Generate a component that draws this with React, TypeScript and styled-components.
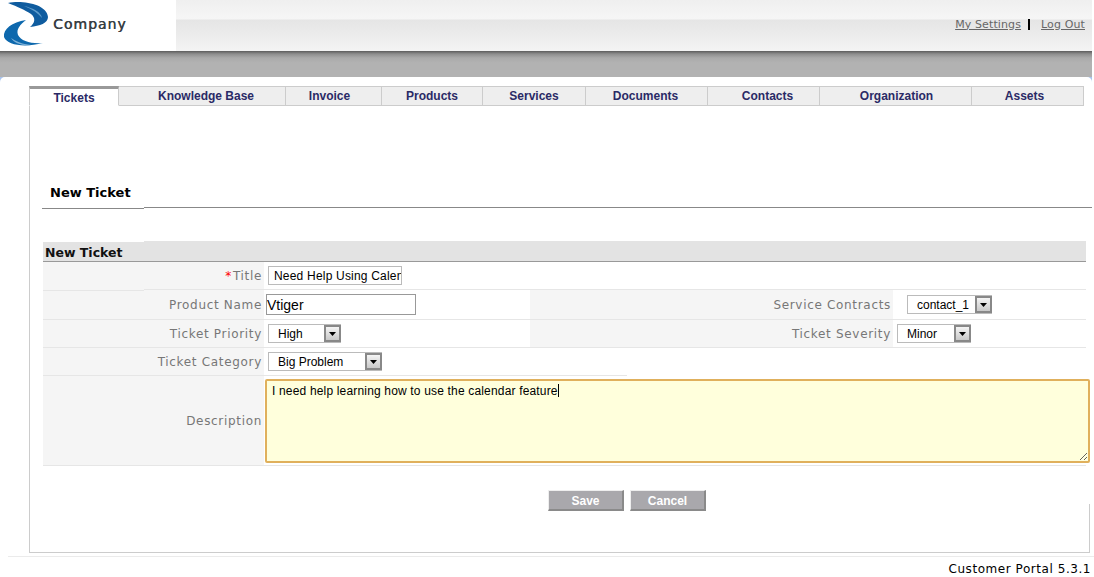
import React from 'react';
import styled, { createGlobalStyle } from 'styled-components';

const TABS = [
  { name: 'Tickets', width: 90, active: true, shift: 0 },
  { name: 'Knowledge Base', width: 167, shift: 4 },
  { name: 'Invoice', width: 96, shift: -4 },
  { name: 'Products', width: 101, shift: 0 },
  { name: 'Services', width: 103, shift: 0 },
  { name: 'Documents', width: 122, shift: -1 },
  { name: 'Contacts', width: 112, shift: 4 },
  { name: 'Organization', width: 152, shift: 1 },
  { name: 'Assets', width: 112, shift: -3 },
];

const GUTTER_ROWS = [29, 29, 28, 28, 90];

const Logo = () => (
  <svg width="52" height="50" viewBox="0 0 52 50">
    <path
      d="M8 3 C22 0 47 4 48 17 C48 23 40 26 30 27 C35 23 36 18 31 14 C25 10 18 7 8 3 Z"
      fill="#0f5c9f"
    />
    <path d="M24 6 C33 8 41 12 42 18 C38 13 32 9 24 6 Z" fill="#5f9ccb" />
    <path
      d="M26 20 C12 22 3 29 4 37 C7 45 24 48 43 43 C31 44 21 41 18 35 C16 29 20 25 26 20 Z"
      fill="#0d68ad"
    />
    <path d="M11 38 C15 41 22 44 31 45 C22 46 14 43 11 38 Z" fill="#7fb2d8" />
  </svg>
);

const Arrow = () => (
  <svg width="7" height="4" viewBox="0 0 7 4">
    <path d="M0 0 H7 L3.5 4 Z" fill="#000" />
  </svg>
);

const Select = ({
  value,
  width,
  valueInset = 9,
  offset = 4,
}: {
  value: string;
  width: number;
  valueInset?: number;
  offset?: number;
}) => (
  <SelectBox $width={width} $offset={offset}>
    <SelectValue $inset={valueInset}>{value}</SelectValue>
    <SelectButton>
      <Arrow />
    </SelectButton>
  </SelectBox>
);

export default function App() {
  return (
    <Page>
      <GlobalStyle />
      <Header>
        <LogoBox>
          <Logo />
          <LogoText>Company</LogoText>
        </LogoBox>
        <UserLinks>
          <UserLink href="#">My Settings</UserLink>
          <LinkDivider />
          <UserLink href="#">Log Out</UserLink>
        </UserLinks>
      </Header>
      <Band />
      <MainBackdrop>
        <Main>
          <Tabs>
            {TABS.map((tab) => (
              <Tab
                key={tab.name}
                $width={tab.width}
                $active={tab.active}
                $shift={tab.shift}
              >
                {tab.name}
              </Tab>
            ))}
          </Tabs>
          <Panel>
            <Heading>
              <HeadingLead>New Ticket</HeadingLead>
              <HeadingRule />
            </Heading>
            <Form>
              <Gutter>
                <GutterTitle>New Ticket</GutterTitle>
                {GUTTER_ROWS.map((height, i) => (
                  <GutterCell key={i} $height={height} />
                ))}
              </Gutter>
              <Fields>
                <FieldsBand />
                <Row $height={28}>
                  <Label>
                    <Required>*</Required>Title
                  </Label>
                  <Value>
                    <TitleInput defaultValue="Need Help Using Calendar" />
                  </Value>
                </Row>
                <Row $height={30}>
                  <Label>Product Name</Label>
                  <Value>
                    <ProductInput defaultValue="Vtiger" />
                  </Value>
                  <Label>Service Contracts</Label>
                  <Value>
                    <Select value="contact_1" width={85} offset={14} />
                  </Value>
                </Row>
                <Row $height={28}>
                  <Label>Ticket Priority</Label>
                  <Value>
                    <Select value="High" width={73} />
                  </Value>
                  <Label>Ticket Severity</Label>
                  <Value>
                    <Select value="Minor" width={74} />
                  </Value>
                </Row>
                <Row $height={28} $short>
                  <Label>Ticket Category</Label>
                  <Value>
                    <Select value="Big Problem" width={114} />
                  </Value>
                </Row>
                <Row $height={90}>
                  <Label>Description</Label>
                  <Value>
                    <Description>
                      I need help learning how to use the calendar feature
                      <Caret />
                    </Description>
                  </Value>
                </Row>
              </Fields>
            </Form>
            <Actions>
              <ActionButton>Save</ActionButton>
              <ActionButton>Cancel</ActionButton>
            </Actions>
          </Panel>
        </Main>
      </MainBackdrop>
      <Footer>Customer Portal 5.3.1</Footer>
    </Page>
  );
}

const GlobalStyle = createGlobalStyle`
  html, body {
    margin: 0;
    padding: 0;
    background: #fff;
  }
  body {
    font-family: "Liberation Sans", Arial, sans-serif;
    overflow: hidden;
  }
`;

const Page = styled.div`
  width: 1094px;
  height: 577px;
  overflow: hidden;
`;

const Header = styled.header`
  width: 1092px;
  height: 51px;
  display: flex;
  justify-content: space-between;
  background: linear-gradient(#efefef, #f6f6f6 19px, #e5e5e5 20px, #f3f3f3 50px);
`;

const LogoBox = styled.div`
  width: 176px;
  height: 51px;
  background: #fff;
  display: flex;
  align-items: flex-start;
  gap: 1px;
`;

const LogoText = styled.span`
  font-family: "DejaVu Sans", sans-serif;
  font-size: 14px;
  line-height: 16px;
  letter-spacing: 1px;
  color: #383e44;
  margin-top: 16px;
  text-shadow: 0.4px 0 0 #383e44;
`;

const UserLinks = styled.nav`
  display: flex;
  align-items: center;
  height: 48px;
  gap: 7px;
  padding-right: 7px;
`;

const UserLink = styled.a`
  font-family: "DejaVu Sans", sans-serif;
  font-size: 11px;
  letter-spacing: 0.12px;
  color: #666;
  text-decoration: underline;
`;

const LinkDivider = styled.span`
  width: 2px;
  height: 11px;
  margin-right: 4px;
  background: #000;
`;

const Band = styled.div`
  width: 1092px;
  height: 26px;
  background: linear-gradient(#5c5c5c, #8e8e8e 3px, #aaa 7px, #b2b2b2 12px);
`;

const MainBackdrop = styled.div`
  width: 1092px;
  background: linear-gradient(#a9c4ee 5px, #fff 5px);
`;

const Main = styled.main`
  background: #fff;
  border-radius: 5px 5px 0 0;
  padding: 9px 0 0 29px;
`;

const Tabs = styled.div`
  display: flex;
  height: 20px;
`;

const Tab = styled.div<{ $width: number; $active?: boolean; $shift: number }>`
  width: ${(p) => p.$width}px;
  box-sizing: border-box;
  display: flex;
  align-items: center;
  justify-content: center;
  font-size: 12px;
  font-weight: bold;
  color: #2a2a66;
  background: ${(p) => (p.$active ? '#fff' : '#eee')};
  border: 1px solid #ccc;
  border-left-width: ${(p) => (p.$active ? 1 : 0)}px;
  border-top: ${(p) => (p.$active ? '3px solid #999' : '1px solid #ccc')};
  border-bottom-color: ${(p) => (p.$active ? '#fff' : '#ccc')};
  padding-top: ${(p) => (p.$active ? 2 : 0)}px;
  padding-left: ${(p) => Math.max(p.$shift, 0) * 2}px;
  padding-right: ${(p) => Math.max(-p.$shift, 0) * 2}px;
`;

const Panel = styled.div`
  position: relative;
  width: 1061px;
  height: 447px;
  box-sizing: border-box;
  border-left: 1px solid #ccc;
  border-bottom: 1px solid #ccc;
  padding: 70px 0 0 12px;

  &::after {
    content: '';
    position: absolute;
    right: 0;
    bottom: 0;
    width: 1px;
    height: 48px;
    background: #ccc;
  }
`;

const Heading = styled.div`
  display: flex;
  width: 1050px;
  align-items: flex-end;
`;

const HeadingLead = styled.h2`
  width: 102px;
  height: 33px;
  margin: 0;
  padding: 8px 0 0 8px;
  box-sizing: border-box;
  font-family: "DejaVu Sans", sans-serif;
  font-size: 13px;
  line-height: 17px;
  font-weight: bold;
  color: #000;
  border-bottom: 1px solid #888;
`;

const HeadingRule = styled.div`
  flex: 1;
  margin-bottom: 1px;
  border-bottom: 1px solid #888;
`;

const Form = styled.div`
  display: flex;
  margin: 32px 0 0 1px;
`;

const Gutter = styled.div`
  width: 101px;
  margin-top: 1px;
`;

const GutterTitle = styled.div`
  height: 20px;
  box-sizing: border-box;
  background: #e3e3e3;
  border-bottom: 1px solid #999;
  padding-left: 2px;
  font-family: "DejaVu Sans", sans-serif;
  font-size: 12.5px;
  line-height: 21px;
  font-weight: bold;
  color: #111;
  white-space: nowrap;
`;

const GutterCell = styled.div<{ $height: number }>`
  height: ${(p) => p.$height}px;
  box-sizing: border-box;
  background: #f5f5f5;
  border-bottom: 1px solid #e6e6e6;
`;

const Fields = styled.div`
  width: 942px;
`;

const FieldsBand = styled.div`
  height: 21px;
  box-sizing: border-box;
  background: #e3e3e3;
  border-bottom: 1px solid #999;
`;

const Row = styled.div<{ $height: number; $short?: boolean }>`
  display: grid;
  grid-template-columns: 120px 266px 363px 193px;
  height: ${(p) => p.$height}px;
  box-sizing: border-box;
  width: ${(p) => (p.$short ? '483px' : '942px')};
  border-bottom: 1px solid #e6e6e6;
`;

const Label = styled.div`
  background: #f5f5f5;
  display: flex;
  align-items: center;
  justify-content: flex-end;
  padding-right: 2px;
  font-family: "DejaVu Sans", sans-serif;
  font-size: 12px;
  letter-spacing: 0.68px;
  color: #777;
  white-space: nowrap;
`;

const Required = styled.span`
  color: #f00;
  margin-right: 1px;
`;

const Value = styled.div`
  display: flex;
  align-items: center;
  min-width: 0;
`;

const TitleInput = styled.input`
  width: 134px;
  height: 19px;
  margin-left: 4px;
  box-sizing: border-box;
  border: 1px solid #bbb;
  padding: 0 0 0 5px;
  font-family: "Liberation Sans", Arial, sans-serif;
  font-size: 12px;
  letter-spacing: 0.2px;
  color: #000;
  background: #fff;
  outline: none;
`;

const ProductInput = styled.input`
  width: 150px;
  height: 21px;
  margin-left: 2px;
  box-sizing: border-box;
  border: 1px solid #999;
  padding: 0;
  font-family: "Liberation Sans", Arial, sans-serif;
  font-size: 14px;
  color: #000;
  background: #fff;
  outline: none;
`;

const SelectBox = styled.div<{ $width: number; $offset: number }>`
  width: ${(p) => p.$width}px;
  height: 19px;
  margin-left: ${(p) => p.$offset}px;
  box-sizing: border-box;
  display: flex;
  align-items: center;
  justify-content: space-between;
  border: 1px solid #bbb;
  border-right: 0;
  background: #fff;
`;

const SelectValue = styled.span<{ $inset: number }>`
  padding-left: ${(p) => p.$inset}px;
  font-size: 12px;
  color: #000;
  white-space: nowrap;
`;

const SelectButton = styled.span`
  width: 17px;
  height: 17px;
  box-sizing: border-box;
  display: flex;
  align-items: center;
  justify-content: center;
  border: 2px solid #888;
  background: linear-gradient(#f4f4f4, #c8c8c8);
`;

const Description = styled.div`
  flex: none;
  width: 825px;
  height: 84px;
  margin-left: 1px;
  box-sizing: border-box;
  border: 2px solid #e0b05c;
  border-radius: 2px;
  background: #ffffdc;
  padding: 3px 5px;
  font-size: 12px;
  line-height: 15px;
  letter-spacing: 0.17px;
  color: #000;
  resize: both;
  overflow: hidden;
`;

const Caret = styled.span`
  display: inline-block;
  width: 1px;
  height: 13px;
  background: #000;
  vertical-align: -2px;
`;

const Actions = styled.div`
  display: flex;
  gap: 6px;
  margin: 24px 0 0 506px;
`;

const ActionButton = styled.button`
  width: 76px;
  height: 21px;
  padding: 1px 0 0;
  box-sizing: border-box;
  border-style: solid;
  border-width: 1px 2px 2px 1px;
  border-color: #eee #8a8a8a #8a8a8a #eee;
  background: #a9a8ac;
  font-family: "Liberation Sans", Arial, sans-serif;
  font-size: 12px;
  font-weight: bold;
  color: #fff;
`;

const Footer = styled.footer`
  margin: 3px 0 0 8px;
  border-top: 1px solid #ebebeb;
  padding-right: 3px;
  text-align: right;
  font-family: "DejaVu Sans", sans-serif;
  font-size: 12px;
  line-height: 24px;
  letter-spacing: 0.55px;
  color: #000;
`;
